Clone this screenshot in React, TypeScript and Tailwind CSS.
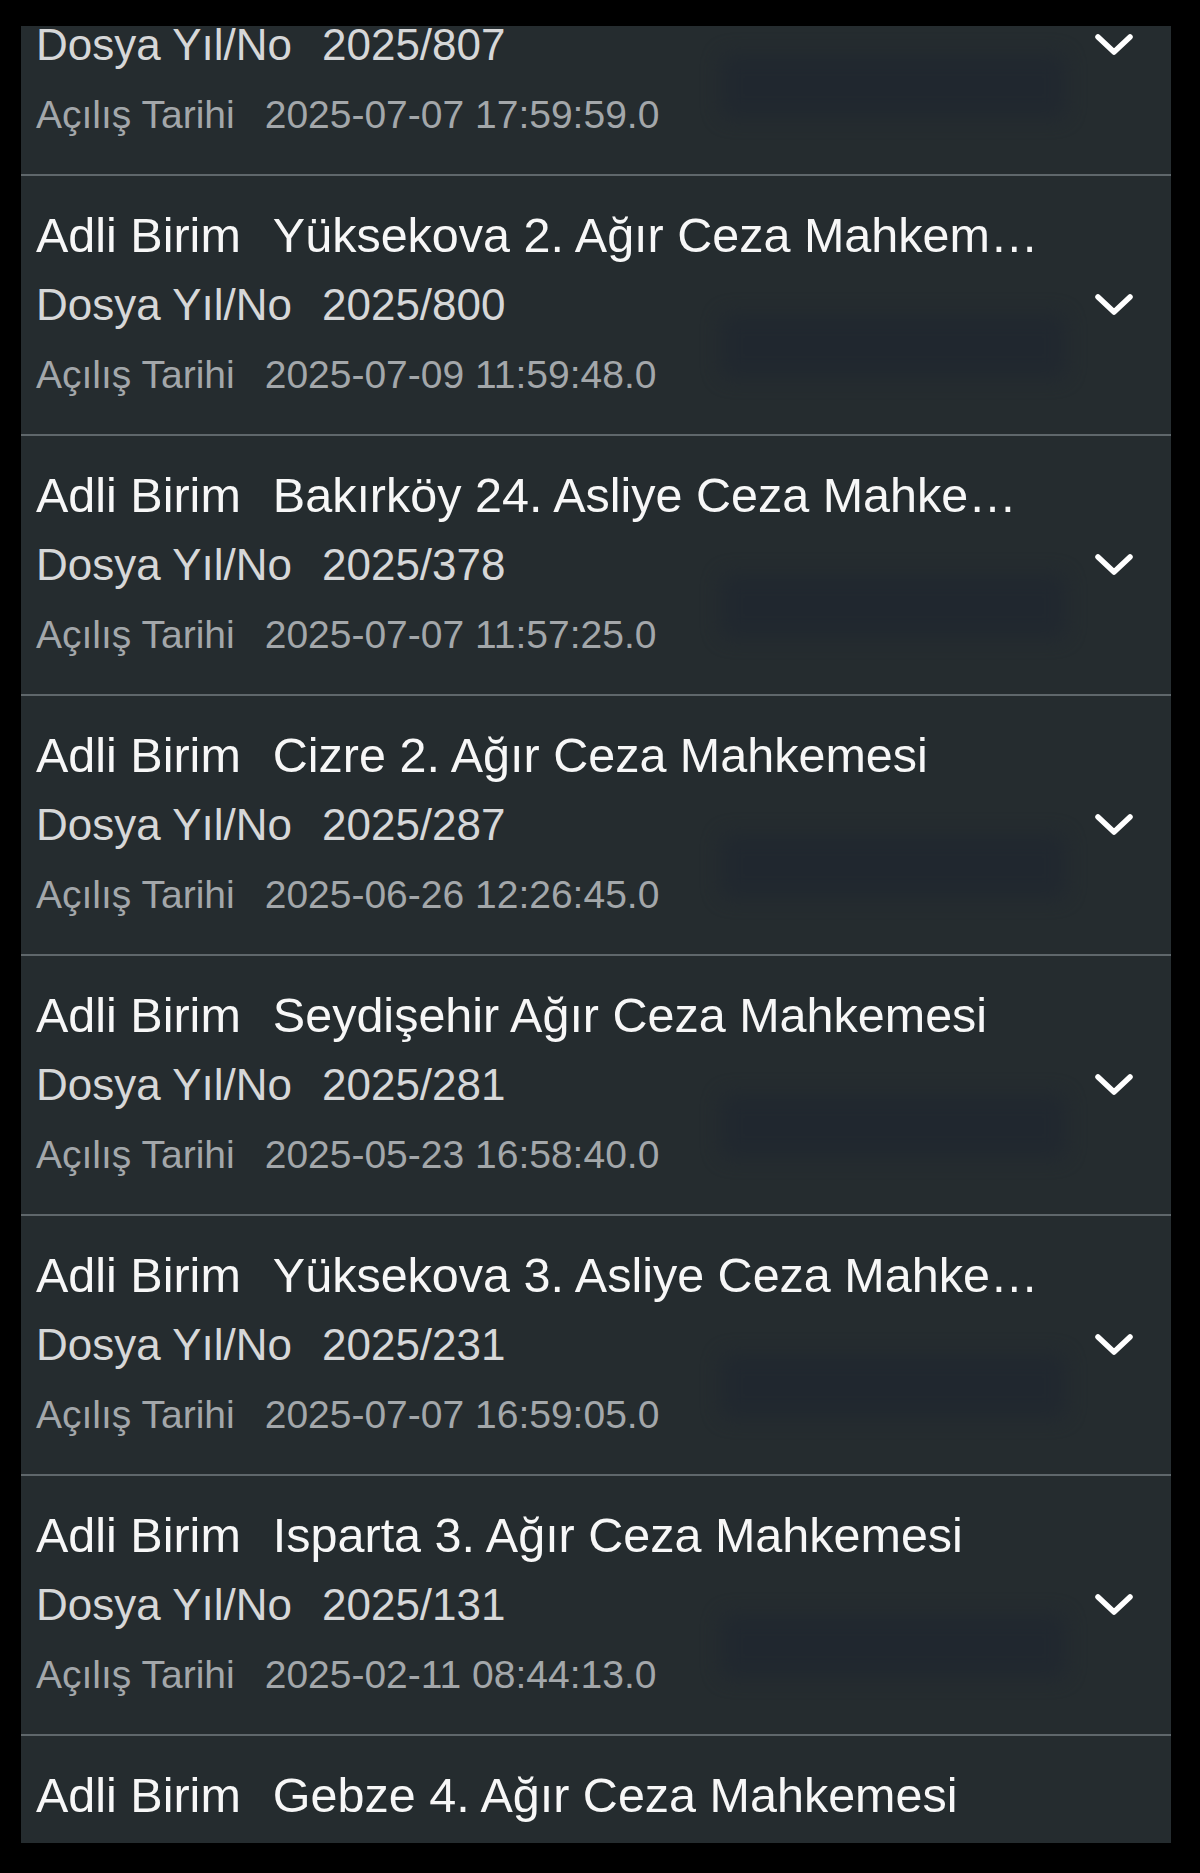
const files = [
  { unit: "Yüksekova 1. Ağır Ceza Mahkemesi", no: "2025/807", opened: "2025-07-07 17:59:59.0" },
  { unit: "Yüksekova 2. Ağır Ceza Mahkemesi", no: "2025/800", opened: "2025-07-09 11:59:48.0" },
  { unit: "Bakırköy 24. Asliye Ceza Mahkemesi", no: "2025/378", opened: "2025-07-07 11:57:25.0" },
  { unit: "Cizre 2. Ağır Ceza Mahkemesi", no: "2025/287", opened: "2025-06-26 12:26:45.0" },
  { unit: "Seydişehir Ağır Ceza Mahkemesi", no: "2025/281", opened: "2025-05-23 16:58:40.0" },
  { unit: "Yüksekova 3. Asliye Ceza Mahkemesi", no: "2025/231", opened: "2025-07-07 16:59:05.0" },
  { unit: "Isparta 3. Ağır Ceza Mahkemesi", no: "2025/131", opened: "2025-02-11 08:44:13.0" },
  { unit: "Gebze 4. Ağır Ceza Mahkemesi", no: "2025/118", opened: "2025-01-30 10:12:04.0" },
];

// chevron drawn by hand, lucide's is too thin for this one
function Chevron() {
  return (
    <svg width="40" height="24" viewBox="0 0 40 24" className="block">
      <polyline
        points="4,4 20,19 36,4"
        fill="none"
        stroke="#ffffff"
        strokeWidth="5.5"
        strokeLinecap="round"
        strokeLinejoin="round"
      />
    </svg>
  );
}

export default function App() {
  return (
    <div
      className="w-[1200px] h-[1873px] bg-black pt-[26px] pl-[21px] pr-[29px] pb-[30px]"
      style={{ fontFamily: '"Liberation Sans", Arial, sans-serif' }}
    >
      <div className="h-full bg-[#252c2f] overflow-hidden">
        <div className="-mt-[110px]">
          {files.map((f) => (
            <div
              key={f.no}
              className="relative h-[260px] border-b-2 border-[#5f676b] pt-[24px] pl-[15px] pr-[37px] flex items-start"
            >
              {/* blurred redaction patch */}
              <div className="pointer-events-none absolute left-[700px] top-[138px] w-[345px] h-[64px] rounded-lg bg-[#1e2530] blur-[10px] opacity-60" />
              <div className="relative flex-1 min-w-0">
                <div className="h-[70px] flex items-center text-[48.5px] text-[#f7f7f7] whitespace-nowrap overflow-hidden">
                  <span className="mr-[32px] shrink-0">Adli Birim</span>
                  <span className="truncate">{f.unit}</span>
                </div>
                <div className="h-[70px] flex items-center text-[44px] text-[#d6d7d8] whitespace-nowrap">
                  <span className="mr-[30px]">Dosya Yıl/No</span>
                  <span>{f.no}</span>
                </div>
                <div className="h-[70px] flex items-center text-[39px] text-[#a3a7aa] whitespace-nowrap">
                  <span className="mr-[30px]">Açılış Tarihi</span>
                  <span>{f.opened}</span>
                </div>
              </div>
              <div className="relative ml-[44px] h-[210px] flex items-center">
                <Chevron />
              </div>
            </div>
          ))}
        </div>
      </div>
    </div>
  );
}
